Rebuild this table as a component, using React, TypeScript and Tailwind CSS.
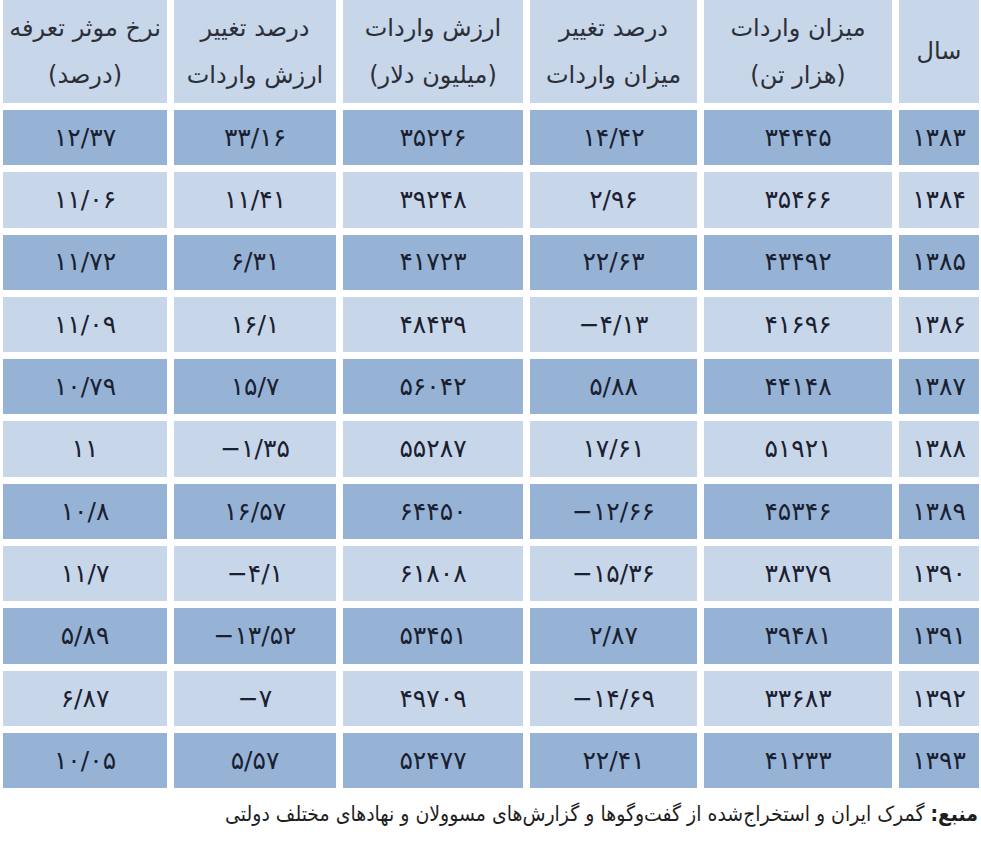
import React from 'react';

const headers: string[][] = [
  ['سال'],
  ['میزان واردات', '(هزار تن)'],
  ['درصد تغییر', 'میزان واردات'],
  ['ارزش واردات', '(میلیون دلار)'],
  ['درصد تغییر', 'ارزش واردات'],
  ['نرخ موثر تعرفه', '(درصد)'],
];

const rows: string[][] = [
  ['۱۳۸۳', '۳۴۴۴۵', '۱۴/۴۲', '۳۵۲۲۶', '۳۳/۱۶', '۱۲/۳۷'],
  ['۱۳۸۴', '۳۵۴۶۶', '۲/۹۶', '۳۹۲۴۸', '۱۱/۴۱', '۱۱/۰۶'],
  ['۱۳۸۵', '۴۳۴۹۲', '۲۲/۶۳', '۴۱۷۲۳', '۶/۳۱', '۱۱/۷۲'],
  ['۱۳۸۶', '۴۱۶۹۶', '−۴/۱۳', '۴۸۴۳۹', '۱۶/۱', '۱۱/۰۹'],
  ['۱۳۸۷', '۴۴۱۴۸', '۵/۸۸', '۵۶۰۴۲', '۱۵/۷', '۱۰/۷۹'],
  ['۱۳۸۸', '۵۱۹۲۱', '۱۷/۶۱', '۵۵۲۸۷', '−۱/۳۵', '۱۱'],
  ['۱۳۸۹', '۴۵۳۴۶', '−۱۲/۶۶', '۶۴۴۵۰', '۱۶/۵۷', '۱۰/۸'],
  ['۱۳۹۰', '۳۸۳۷۹', '−۱۵/۳۶', '۶۱۸۰۸', '−۴/۱', '۱۱/۷'],
  ['۱۳۹۱', '۳۹۴۸۱', '۲/۸۷', '۵۳۴۵۱', '−۱۳/۵۲', '۵/۸۹'],
  ['۱۳۹۲', '۳۳۶۸۳', '−۱۴/۶۹', '۴۹۷۰۹', '−۷', '۶/۸۷'],
  ['۱۳۹۳', '۴۱۲۳۳', '۲۲/۴۱', '۵۲۴۷۷', '۵/۵۷', '۱۰/۰۵'],
];

export default function App() {
  return (
    <div className="w-[981px] h-[849px] bg-white overflow-hidden" style={{ fontFamily: '"DejaVu Sans", sans-serif' }}>
      <div dir="rtl" className="grid grid-cols-[80px_188px_167px_180px_162px_164px] gap-[7px] pr-[2px] pl-[3px]">
        {headers.map((lines, i) => (
          <div key={i} className="h-[103px] bg-[#c8d6ea] flex flex-col items-center justify-center text-[24px] leading-[47px] text-[#2b2f38]">
            {lines.map((l, j) => (
              <span key={j}>{l}</span>
            ))}
          </div>
        ))}
        {rows.map((row, r) =>
          row.map((cell, c) => (
            <div
              key={`${r}-${c}`}
              dir="ltr"
              className={`h-[55.3px] flex items-center justify-center text-[25px] tracking-[4px] text-[#1a2030] ${
                r % 2 === 0 ? 'bg-[#96b3d6]' : 'bg-[#c8d6ea]'
              }`}
            >
              {cell}
            </div>
          ))
        )}
      </div>
      <div
        dir="rtl"
        className="pr-[3px] pt-[11px] text-[21px] text-[#1e1e1e]"
        style={{ fontFamily: '"DejaVu Sans Condensed", "DejaVu Sans", sans-serif' }}
      >
        <span className="font-bold">منبع:</span> گمرک ایران و استخراج‌شده از گفت‌وگوها و گزارش‌های مسوولان و نهادهای مختلف دولتی
      </div>
    </div>
  );
}
